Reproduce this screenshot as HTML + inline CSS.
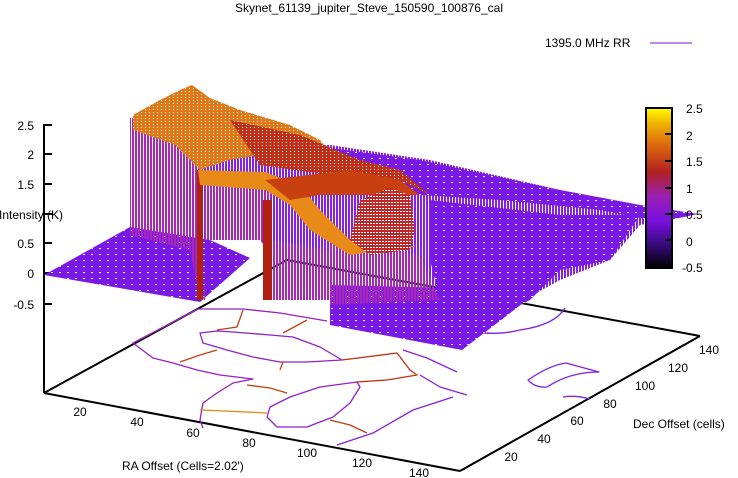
<!DOCTYPE html>
<html><head><style>
html,body{margin:0;padding:0;background:#fff}
svg{display:block}
text{font-family:"Liberation Sans",sans-serif;font-size:12px;fill:#000}
</style></head><body>
<svg width="738" height="478" viewBox="0 0 738 478" xmlns="http://www.w3.org/2000/svg">
<defs>
<pattern id="wm" width="3" height="6" patternUnits="userSpaceOnUse"><rect width="2" height="6" fill="#a828b8"/></pattern>
<pattern id="wp" width="3" height="6" patternUnits="userSpaceOnUse"><rect width="2" height="6" fill="#8a20e0"/></pattern>
<pattern id="pp" width="8" height="6" patternUnits="userSpaceOnUse"><rect width="8" height="6" fill="#7a18e6"/><rect x="3" y="2" width="2" height="1" fill="#fff"/></pattern>
<pattern id="po" width="4" height="3" patternUnits="userSpaceOnUse"><rect width="4" height="3" fill="#e07818"/><rect x="1" y="1" width="1" height="1" fill="#fff"/></pattern>
<pattern id="pr" width="4" height="3" patternUnits="userSpaceOnUse"><rect width="4" height="3" fill="#c03018"/><rect x="2" y="1" width="1" height="1" fill="#fff"/></pattern>
<pattern id="prl" width="3" height="3" patternUnits="userSpaceOnUse"><rect width="3" height="3" fill="#c02828"/><rect x="1" y="1" width="2" height="1" fill="#fff"/></pattern>
<linearGradient id="cb" x1="0" y1="1" x2="0" y2="0">
<stop offset="0" stop-color="#000"/><stop offset="0.15" stop-color="#3a0a80"/><stop offset="0.3" stop-color="#7a10e0"/><stop offset="0.45" stop-color="#9b20b0"/><stop offset="0.6" stop-color="#b02020"/><stop offset="0.75" stop-color="#d86010"/><stop offset="0.9" stop-color="#f0b000"/><stop offset="1" stop-color="#ffff00"/>
</linearGradient>
</defs>

<text x="369" y="12" text-anchor="middle">Skynet_61139_jupiter_Steve_150590_100876_cal</text>
<text x="545" y="47">1395.0 MHz RR</text>
<line x1="650" y1="43" x2="692" y2="43" stroke="#7a18e6" stroke-width="1"/>

<!-- base axes -->
<g stroke="#000" stroke-width="2" fill="none">
<line x1="44" y1="124" x2="44" y2="393"/>
<line x1="44" y1="393" x2="287" y2="260"/>
<line x1="287" y1="260" x2="700" y2="336"/>
<line x1="44" y1="393" x2="460" y2="471"/>
<line x1="460" y1="471" x2="700" y2="336"/>
</g>
<g stroke="#000" stroke-width="2">
<line x1="44" y1="125" x2="52" y2="125"/><line x1="44" y1="154" x2="52" y2="154"/><line x1="44" y1="184" x2="52" y2="184"/><line x1="44" y1="214" x2="52" y2="214"/><line x1="44" y1="243" x2="52" y2="243"/><line x1="44" y1="273" x2="52" y2="273"/><line x1="44" y1="304" x2="52" y2="304"/>
</g>
<text x="34" y="130" text-anchor="end">2.5</text>
<text x="34" y="159" text-anchor="end">2</text>
<text x="34" y="189" text-anchor="end">1.5</text>
<text x="-1" y="219">Intensity (K)</text>
<text x="34" y="248" text-anchor="end">0.5</text>
<text x="34" y="278" text-anchor="end">0</text>
<text x="34" y="309" text-anchor="end">-0.5</text>

<!-- contour lines on base -->
<g fill="none" stroke-width="1.3" stroke-linejoin="round">
<path d="M327 321 L280 313 L243 309 L198 309 L133 343 L153 358 L173 363 L197 370 L220 375 L253 379 L233 383 L217 393 L203 403 L200 420 L203 428" stroke="#9a20c0"/>
<path d="M200 333 L217 331 L233 332 L270 335 L293 337 L320 347 L342 360 L307 362 L280 362 L253 357 L227 350 L203 343 Z" stroke="#9020c8"/>
<path d="M342 360 L397 353 L410 370 L417 375 L387 380 L357 382" stroke="#c03010"/>
<path d="M357 382 L320 387 L290 397 L270 407 L267 417 L277 427 L307 427 L333 417 L350 403 L360 387 Z" stroke="#9020c8"/>
<path d="M403 350 L427 358 L457 372 M420 375 L440 387 L467 395 M453 397 L413 410 L373 433 L337 445" stroke="#8a20e0"/>
<path d="M200 410 L225 411 L267 413" stroke="#e08a10"/>
<path d="M247 385 L270 388 L287 393 M217 350 L200 355 L180 362 M243 310 L237 327 L217 330 M307 320 L283 333 M280 370 L283 362 M330 420 L350 425 L367 433" stroke="#c04010"/>
<path d="M440 320 Q480 340 520 330 Q555 325 565 308" stroke="#8020e0"/>
<path d="M528 380 Q550 365 566 363 L599 372 Q570 372 547 387 Q535 388 528 380Z" stroke="#8020e0"/>
<path d="M563 397 Q575 395 590 399" stroke="#8020e0"/>
</g>

<!-- back walls/plane -->
<polygon points="200,150 330,145 430,160 560,190 640,205 698,214 640,225 610,260 560,280 470,330 420,300 330,300 300,280 275,260 260,240 200,240" fill="url(#wp)"/>
<polygon points="250,150 330,148 420,160 560,190 640,205 698,214 660,222 600,210 500,200 420,195" fill="url(#pp)"/>
<polygon points="430,200 560,215 640,215 610,260 560,270 530,300 470,330 440,300 430,260" fill="url(#pp)"/>
<!-- front lower box -->
<polygon points="330,285 540,290 462,350 330,325" fill="url(#pp)"/>
<polygon points="330,240 420,255 440,300 330,305" fill="url(#wm)"/>
<polygon points="270,240 330,250 330,300 270,300" fill="url(#wm)"/>
<!-- left flat plane -->
<polygon points="44,275 130,227 210,240 250,258 200,302" fill="url(#pp)"/>
<!-- big left wall -->
<polygon points="130,118 200,118 205,300 200,300 190,250 130,235" fill="url(#wm)"/>
<polygon points="200,170 270,185 270,240 205,240" fill="url(#wm)"/>
<rect x="197" y="170" width="6" height="130" fill="#b02010"/>
<rect x="263" y="200" width="9" height="100" fill="#b02010"/>
<!-- orange top -->
<polygon points="133,115 160,100 180,90 192,85 210,98 240,110 290,125 320,140 335,160 300,160 260,155 230,160 200,170 175,145 133,130" fill="url(#po)"/>
<polygon points="230,120 300,135 360,160 400,170 430,195 400,180 330,175 260,165" fill="url(#pr)"/>
<!-- orange ridge -->
<polygon points="198,170 265,172 300,185 320,210 350,240 400,250 420,245 350,255 310,230 290,205 265,190 200,185" fill="#e88a18"/>
<polygon points="265,180 350,170 400,180 420,195 380,195 320,195 290,200" fill="#c84010"/>
<!-- round red blob -->
<polygon points="360,200 390,188 410,195 415,230 410,250 370,255 350,240" fill="url(#prl)"/>

<!-- tick labels -->
<g text-anchor="middle">
<text x="80" y="416">20</text>
<text x="137" y="426">40</text>
<text x="193" y="437">60</text>
<text x="249" y="447">80</text>
<text x="307" y="457">100</text>
<text x="362" y="467">120</text>
<text x="419" y="477">140</text>
<text x="511" y="461">20</text>
<text x="544" y="443">40</text>
<text x="577" y="425">60</text>
<text x="610" y="408">80</text>
<text x="645" y="390">100</text>
<text x="678" y="372">120</text>
<text x="709" y="354">140</text>
</g>
<text x="122" y="470">RA Offset (Cells=2.02')</text>
<text x="633" y="428">Dec Offset (cells)</text>

<!-- colorbar -->
<rect x="646" y="108" width="26" height="160" fill="url(#cb)" stroke="#000" stroke-width="2"/>
<g stroke="#000" stroke-width="2">
<line x1="665" y1="134" x2="672" y2="134"/><line x1="665" y1="161" x2="672" y2="161"/><line x1="665" y1="188" x2="672" y2="188"/><line x1="665" y1="214" x2="672" y2="214"/><line x1="665" y1="240" x2="672" y2="240"/>
</g>
<text x="686" y="113">2.5</text>
<text x="686" y="140">2</text>
<text x="686" y="166">1.5</text>
<text x="686" y="193">1</text>
<text x="686" y="219">0.5</text>
<text x="686" y="246">0</text>
<text x="682" y="272">-0.5</text>
</svg>
</body></html>
